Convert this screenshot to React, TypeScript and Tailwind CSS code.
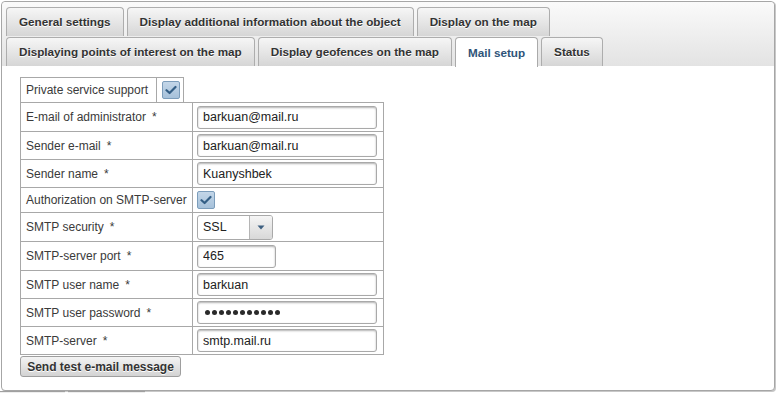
import React from "react";

const font = { fontFamily: '"Liberation Sans", Arial, sans-serif' };

function Tab({ label, active }: { label: string; active?: boolean }) {
  return (
    <div
      className={
        "h-[29px] px-[12px] flex items-center border border-b-0 rounded-t-[4px] text-[11.7px] font-bold whitespace-nowrap " +
        (active
          ? "bg-white border-[#aaaaaa] text-[#2f5479] h-[30px] mb-[-1px]"
          : "bg-gradient-to-b from-[#f6f6f6] to-[#d6d6d6] border-[#adadad] text-[#333] [text-shadow:0_1px_0_#ffffff]")
      }
    >
      {label}
    </div>
  );
}

function Label({ text, star = true }: { text: string; star?: boolean }) {
  return (
    <div className="w-[172px] shrink-0 border-r border-[#a8a8a8] pl-[5px] flex items-center text-[12px] text-[#3a3a3a] whitespace-nowrap">
      {text}
      {star && <span className="ml-[6px]">*</span>}
    </div>
  );
}

function TextInput({ value, w = 180 }: { value: string; w?: number }) {
  return (
    <input
      readOnly
      defaultValue={value}
      style={{ width: w }}
      className="h-[23px] border border-[#a9a9a9] rounded-[3px] bg-white px-[5px] text-[12.5px] text-[#222] shadow-[inset_0_1px_2px_rgba(0,0,0,0.3)] outline-none"
    />
  );
}

function Check() {
  return (
    <div className="w-[18px] h-[18px] rounded-[2px] border border-[#7c9dbb] bg-gradient-to-b from-[#c3d6e8] to-[#a6c1da] flex items-center justify-center">
      <svg width="12" height="10" viewBox="0 0 12 10">
        <path d="M1.5 5.2 L4.6 8 L10.5 2" fill="none" stroke="#345f86" strokeWidth="2.2" strokeLinecap="round" strokeLinejoin="round" />
      </svg>
    </div>
  );
}

function Row({ h, children }: { h: number; children: React.ReactNode }) {
  return (
    <div style={{ height: h }} className="flex border-b border-[#a8a8a8] last:border-b-0">
      {children}
    </div>
  );
}

export default function App() {
  return (
    <div style={font} className="w-[776px] h-[393px] bg-white overflow-hidden relative">
      <div className="ml-[1px] mt-[1px] w-[774px] h-[390px] border border-[#a6a6a6] rounded-[4px] shadow-[1px_1px_0_#c8c8c8] overflow-hidden bg-white flex flex-col">
        <div className="bg-gradient-to-b from-[#fafafa] to-[#e3e3e3] pt-[5px] px-[4px] flex flex-col gap-[1px] rounded-t-[4px]">
          <div className="flex gap-[3px] items-end">
            <Tab label="General settings" />
            <Tab label="Display additional information about the object" />
            <Tab label="Display on the map" />
          </div>
          <div className="flex gap-[3px] items-end">
            <Tab label="Displaying points of interest on the map" />
            <Tab label="Display geofences on the map" />
            <Tab label="Mail setup" active />
            <Tab label="Status" />
          </div>
        </div>
        <div className="pl-[18px] pt-[11px]">
          <div className="w-[164px] h-[25px] flex border border-b-0 border-[#a8a8a8]">
            <div className="w-[136px] border-r border-[#a8a8a8] pl-[5px] flex items-center text-[12px] text-[#3a3a3a] whitespace-nowrap">
              Private service support
            </div>
            <div className="flex items-center pl-[5px]">
              <Check />
            </div>
          </div>
          <div className="w-[364px] border border-[#a8a8a8] flex flex-col">
            <Row h={29}>
              <Label text="E-mail of administrator" />
              <div className="flex items-center pl-[4px]"><TextInput value="barkuan@mail.ru" /></div>
            </Row>
            <Row h={28}>
              <Label text="Sender e-mail" />
              <div className="flex items-center pl-[4px]"><TextInput value="barkuan@mail.ru" /></div>
            </Row>
            <Row h={28}>
              <Label text="Sender name" />
              <div className="flex items-center pl-[4px]"><TextInput value="Kuanyshbek" /></div>
            </Row>
            <Row h={25}>
              <Label text="Authorization on SMTP-server" star={false} />
              <div className="flex items-center pl-[4px]"><Check /></div>
            </Row>
            <Row h={29}>
              <Label text="SMTP security" />
              <div className="flex items-center pl-[4px]">
                <div className="w-[76px] h-[25px] border border-[#a9a9a9] rounded-[3px] flex overflow-hidden bg-white">
                  <div className="flex-1 flex items-center pl-[5px] text-[12.5px] text-[#222]">SSL</div>
                  <div className="w-[23px] border-l border-[#b5b5b5] bg-gradient-to-b from-[#f5f5f5] to-[#d8d8d8] flex items-center justify-center">
                    <svg width="8" height="5" viewBox="0 0 8 5"><path d="M0.5 0.5 H7.5 L4 4.5 Z" fill="#3d5f80" /></svg>
                  </div>
                </div>
              </div>
            </Row>
            <Row h={29}>
              <Label text="SMTP-server port" />
              <div className="flex items-center pl-[4px]"><TextInput value="465" w={79} /></div>
            </Row>
            <Row h={28}>
              <Label text="SMTP user name" />
              <div className="flex items-center pl-[4px]"><TextInput value="barkuan" /></div>
            </Row>
            <Row h={28}>
              <Label text="SMTP user password" />
              <div className="flex items-center pl-[4px]">
                <div className="w-[180px] h-[23px] border border-[#a9a9a9] rounded-[3px] bg-white pl-[7px] flex items-center gap-[2px] shadow-[inset_0_1px_2px_rgba(0,0,0,0.3)]">
                  {Array.from({ length: 11 }).map((_, i) => (
                    <span key={i} className="w-[5px] h-[5px] rounded-full bg-[#2a2a2a]" />
                  ))}
                </div>
              </div>
            </Row>
            <Row h={27}>
              <Label text="SMTP-server" />
              <div className="flex items-center pl-[4px]"><TextInput value="smtp.mail.ru" /></div>
            </Row>
          </div>
          <button className="mt-[1px] w-[161px] h-[21px] border border-[#9e9e9e] rounded-[3px] bg-gradient-to-b from-[#f4f4f4] to-[#d3d3d3] text-[12px] font-bold text-[#333] [text-shadow:0_1px_0_#ffffff] flex items-center justify-center whitespace-nowrap">
            Send test e-mail message
          </button>
        </div>
      </div>
      <div className="flex gap-[3px] pl-0">
        <div className="w-[65px] h-[2px] border-t border-[#a0a0a0] bg-[#eee]" />
        <div className="w-[77px] h-[2px] border-t border-[#a0a0a0] bg-[#eee]" />
      </div>
    </div>
  );
}
